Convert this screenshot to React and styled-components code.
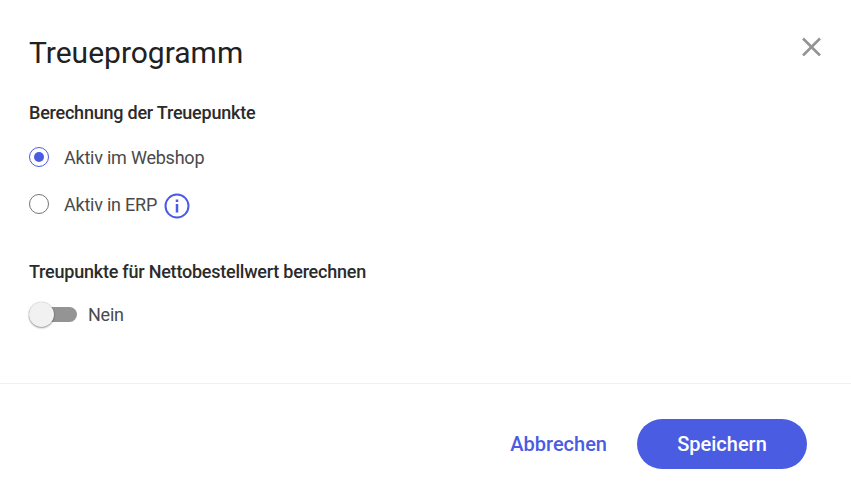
import { useState } from 'react';
import styled, { createGlobalStyle } from 'styled-components';

const GlobalStyle = createGlobalStyle`
  * {
    box-sizing: border-box;
  }

  body {
    margin: 0;
    background: #fff;
    font-family: Roboto, 'Liberation Sans', sans-serif;
  }
`;

const Dialog = styled.div`
  display: flex;
  flex-direction: column;
  height: 503px;
  background: #fff;
`;

const Header = styled.header`
  display: flex;
  justify-content: space-between;
  align-items: flex-start;
  padding: 33px 30px 0 29px;
`;

const Title = styled.h1`
  margin: 0;
  font-size: 30px;
  font-weight: 400;
  line-height: 40px;
  color: #212121;
`;

const CloseButton = styled.button`
  display: flex;
  margin-top: 4px;
  padding: 0;
  border: 0;
  background: none;
  cursor: pointer;
`;

const Body = styled.main`
  flex: 1;
  padding: 0 29px;
  letter-spacing: -0.225px;
`;

const SectionTitle = styled.h2`
  margin: ${({ $top }) => $top}px 0 0;
  font-size: 18px;
  font-weight: 500;
  line-height: 24px;
  color: #2b2b2b;
`;

const Options = styled.div`
  display: flex;
  flex-direction: column;
  gap: 23px;
  margin-top: 21px;
`;

const Option = styled.label`
  display: flex;
  align-items: center;
  height: 24px;
  font-size: 18px;
  line-height: 24px;
  color: #4a4a4a;
  cursor: pointer;
`;

const Radio = styled.input`
  display: grid;
  place-content: center;
  appearance: none;
  width: 20px;
  height: 20px;
  margin: 0 15px 2px 0;
  border: 1px solid ${({ checked }) => (checked ? '#4a5ce2' : '#757575')};
  border-radius: 50%;

  &:checked::before {
    content: '';
    width: 10px;
    height: 10px;
    border-radius: 50%;
    background: #4a5ce2;
  }
`;

const InfoIcon = styled.svg`
  margin: 2px 0 0 7px;
`;

const ToggleRow = styled.label`
  display: flex;
  align-items: center;
  height: 26px;
  margin-top: 17px;
  font-size: 18px;
  color: #4a4a4a;
  cursor: pointer;
`;

const Toggle = styled.button`
  display: flex;
  align-items: center;
  justify-content: ${({ $on }) => ($on ? 'flex-end' : 'flex-start')};
  width: 48px;
  height: 15px;
  margin-right: 11px;
  padding: 0;
  border: 0;
  border-radius: 8px;
  background: ${({ $on }) => ($on ? '#a4adf0' : '#949494')};
  cursor: pointer;
`;

const Thumb = styled.span`
  flex: none;
  width: 25px;
  height: 25px;
  border-radius: 50%;
  background: ${({ $on }) => ($on ? '#4a5ce2' : '#f1f1f1')};
  box-shadow:
    0 1px 2px rgba(0, 0, 0, 0.4),
    0 0 1px rgba(0, 0, 0, 0.3);
`;

const Footer = styled.footer`
  display: flex;
  justify-content: flex-end;
  align-items: flex-start;
  gap: 30px;
  height: 120px;
  padding: 35px 44px 0;
  border-top: 1px solid #f0f0f0;
`;

const Button = styled.button`
  height: 50px;
  padding: 0;
  border: 0;
  background: none;
  font-family: inherit;
  font-size: 20px;
  font-weight: 500;
  color: #4a5ce2;
  cursor: pointer;
`;

const PrimaryButton = styled(Button)`
  width: 170px;
  border-radius: 25px;
  background: #4a5ce2;
  color: #fff;
`;

export default function App() {
  const [source, setSource] = useState('webshop');
  const [net, setNet] = useState(false);

  return (
    <>
      <GlobalStyle />
      <Dialog role="dialog" aria-labelledby="dialog-title">
        <Header>
          <Title id="dialog-title">Treueprogramm</Title>
          <CloseButton type="button" aria-label="Schließen">
            <svg width="19" height="19" viewBox="0 0 19 19" fill="none" stroke="#949494" strokeWidth="2.6">
              <path d="M1 1.5l17 17M18 1.5L1 18.5" />
            </svg>
          </CloseButton>
        </Header>

        <Body>
          <SectionTitle $top={28}>Berechnung der Treuepunkte</SectionTitle>
          <Options>
            <Option>
              <Radio
                type="radio"
                name="source"
                checked={source === 'webshop'}
                onChange={() => setSource('webshop')}
              />
              Aktiv im Webshop
            </Option>
            <Option>
              <Radio type="radio" name="source" checked={source === 'erp'} onChange={() => setSource('erp')} />
              Aktiv in ERP
              <InfoIcon width="26" height="26" viewBox="0 0 26 26" fill="none" stroke="#4a5ce2" strokeWidth="2">
                <circle cx="13" cy="13" r="11.5" />
                <path strokeWidth="2.5" d="M13 11v8.5M13 6.5v2.5" />
              </InfoIcon>
            </Option>
          </Options>

          <SectionTitle $top={43}>Treupunkte für Nettobestellwert berechnen</SectionTitle>
          <ToggleRow>
            <Toggle type="button" role="switch" aria-checked={net} $on={net} onClick={() => setNet(!net)}>
              <Thumb $on={net} />
            </Toggle>
            {net ? 'Ja' : 'Nein'}
          </ToggleRow>
        </Body>

        <Footer>
          <Button type="button">Abbrechen</Button>
          <PrimaryButton type="button">Speichern</PrimaryButton>
        </Footer>
      </Dialog>
    </>
  );
}
